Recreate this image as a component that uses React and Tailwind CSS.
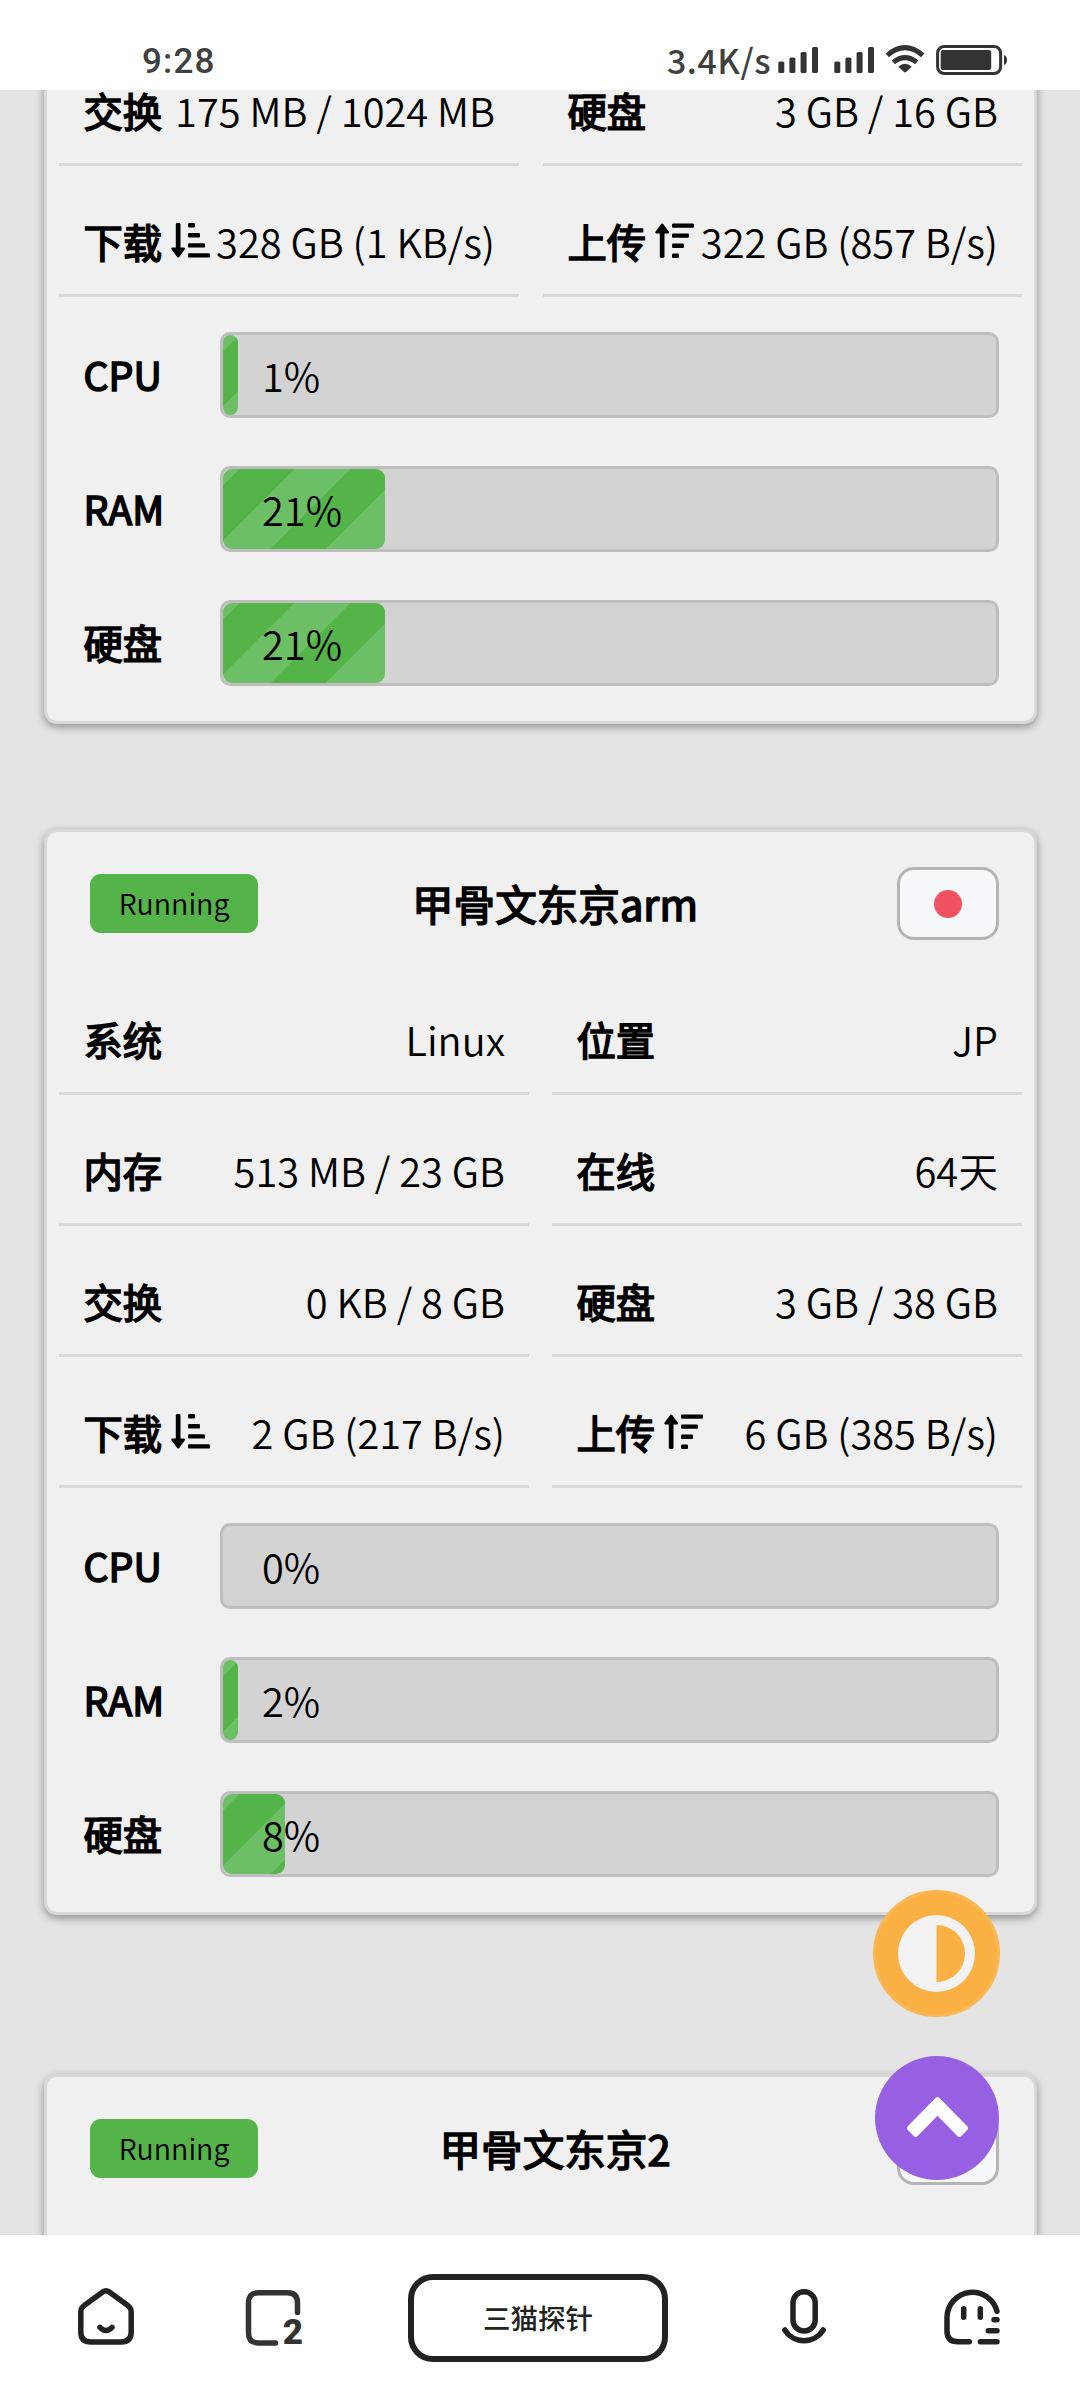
const StatusIcons = () => (
  <svg width="230" height="32" viewBox="0 0 230 32" fill="#333">
    {[0, 56].map((dx) => (
      <g key={dx}>
        <rect x={0.3 + dx} y="17.5" width="6" height="11.5" rx="1.6" />
        <rect x={11.4 + dx} y="13.5" width="6" height="15.5" rx="1.6" />
        <rect x={22.6 + dx} y="8" width="6" height="21" rx="1.6" />
        <rect x={34 + dx} y="3" width="6" height="26" rx="1.6" />
      </g>
    ))}
    <g fill="none" stroke="#333" strokeWidth="5">
      <path d="M109.3 11.3 Q127 -4 144.7 11.3" />
      <path d="M115.3 18.4 Q127 9 138.7 18.4" />
    </g>
    <path d="M120.3 22.7 Q127 17 133.7 22.7 L128 28 Q127 28.8 126 28 Z" />
    <rect x="159.6" y="2.5" width="63" height="27" rx="6.5" fill="none" stroke="#333" strokeWidth="3" />
    <rect x="162.7" y="6" width="50.5" height="20" rx="2.5" />
    <path d="M226 11 Q229 12 229 16 Q229 20 226 21 Z" />
  </svg>
);

const SortIcon = ({ up }) => (
  <svg width="39" height="35" viewBox="0 0 39 35" className={up ? "ml-[9px] -scale-y-100" : "ml-[9px]"}>
    <rect x="4.8" y="0" width="4.7" height="28" rx="1.4" />
    <path d="M1.2 24.6 H13.2 Q14.6 25.2 13.7 26.4 L8.2 33.9 Q7.2 34.9 6.2 33.9 L0.6 26.4 Q-0.2 25.2 1.2 24.6Z" />
    <rect x="17" y="0" width="7" height="4.4" rx="1.2" />
    <rect x="17" y="10.1" width="12" height="4.4" rx="1.2" />
    <rect x="17" y="20.2" width="17" height="4.4" rx="1.2" />
    <rect x="17" y="30.2" width="22" height="4.4" rx="1.2" />
  </svg>
);

const strong = "font-normal [-webkit-text-stroke:1.6px_#000]";

const Row = ({ label, value, icon }) => (
  <div className="flex h-[131px] items-center justify-between border-b-[3px] border-[#d9d9d9] pr-6 pl-[24.5px] pt-5 whitespace-nowrap">
    <div className="flex items-center">
      <span className={`text-[39.3px] ${strong}`}>{label}</span>
      {icon && <SortIcon up={icon === "up"} />}
    </div>
    <span className="-ml-2 pt-px">{value}</span>
  </div>
);

const Bar = ({ label, pct }) => (
  <div className="flex h-[86px] items-center">
    <span className={`w-[136.5px] pb-[3px] text-[39.3px] ${strong}`}>{label}</span>
    <div className="relative h-[86px] flex-1 rounded-[10px] border-[3px] border-[#bebebe] bg-[#d3d3d3]">
      {pct > 0 && (
        <div
          className="h-full min-w-[15px] rounded-[9px] bg-[repeating-linear-gradient(135deg,#6cbf65_0px,#6cbf65_11.7px,#54b349_11.7px,#54b349_50.8px,#6cbf65_50.8px,#6cbf65_78.2px)]"
          style={{ width: `${pct}%` }}
        />
      )}
      <span className="absolute top-0 left-[39px] flex h-full items-center pb-0.5">{pct}%</span>
    </div>
  </div>
);

const Bars = ({ data }) => (
  <div className="flex flex-col gap-12 pt-[35px] pr-[35px] pb-[35px] pl-[36.5px]">
    {data.map(([l, p]) => (
      <Bar key={l} label={l} pct={p} />
    ))}
  </div>
);

const Header = ({ title }) => (
  <div className="flex h-[132px] items-center pr-[35px] pl-[43px] pt-[11px]">
    <div className="flex h-[59px] w-[168px] items-center justify-center rounded-[11px] bg-[#54b349] pb-0.5 text-[28.6px]">
      Running
    </div>
    <span className={`ml-[67px] w-[460px] text-center text-[41.6px] ${strong}`}>{title}</span>
    <div className="ml-auto flex h-[73px] w-[102px] items-center justify-center rounded-[17px] border-[3px] border-[#b4b4b4] bg-[#f5f7fb]">
      <div className="size-7 rounded-full bg-[#ef5362]" />
    </div>
  </div>
);

const card =
  "w-[993px] shrink-0 border-[3px] border-[#d8d8d8] bg-[#f0f0f0] shadow-[0_3px_9px_rgba(0,0,0,0.38)]";

export default function App() {
  return (
    <div className="relative flex h-[2400px] w-[1080px] flex-col overflow-hidden bg-[#e4e4e4] font-['Noto_Sans_CJK_SC',sans-serif] text-[39.8px] leading-[57px] font-[350] text-black">
      <header className="z-10 flex h-[90px] shrink-0 items-start bg-white pt-[44px] font-[Roboto,sans-serif] text-[35px] leading-[34px] font-medium text-[#404040]">
        <span className="ml-[142px] pt-px tracking-[1.2px]">9:28</span>
        <span className="-mt-px ml-auto mr-[7px] font-['Noto_Sans_CJK_SC',sans-serif] text-[34px] tracking-[0.5px]">3.4K/s</span>
        <div className="mr-[72px]">
          <StatusIcons />
        </div>
      </header>

      <main className="flex flex-1 flex-col overflow-hidden pl-11">
        <section className={`${card} -mt-[55px] rounded-b-[13px] border-t-0`}>
          <div className="grid grid-cols-[460px_479px] gap-x-6 pl-3">
            <Row label="交换" value="175 MB / 1024 MB" />
            <Row label="硬盘" value="3 GB / 16 GB" />
            <Row label="下载" icon="down" value="328 GB (1 KB/s)" />
            <Row label="上传" icon="up" value="322 GB (857 B/s)" />
          </div>
          <Bars data={[["CPU", 1], ["RAM", 21], ["硬盘", 21]]} />
        </section>

        <section className={`${card} mt-[105px] rounded-[13px]`}>
          <Header title="甲骨文东京arm" />
          <div className="grid grid-cols-[470px_470px] gap-x-[23px] pl-3">
            <Row label="系统" value="Linux" />
            <Row label="位置" value="JP" />
            <Row label="内存" value="513 MB / 23 GB" />
            <Row label="在线" value="64天" />
            <Row label="交换" value="0 KB / 8 GB" />
            <Row label="硬盘" value="3 GB / 38 GB" />
            <Row label="下载" icon="down" value="2 GB (217 B/s)" />
            <Row label="上传" icon="up" value="6 GB (385 B/s)" />
          </div>
          <Bars data={[["CPU", 0], ["RAM", 2], ["硬盘", 8]]} />
        </section>

        <section className={`${card} mt-[159px] h-[400px] rounded-[13px]`}>
          <Header title="甲骨文东京2" />
        </section>
      </main>

      <div className="absolute top-[1890px] left-[873px] flex size-[127px] items-center justify-center rounded-full border-[3px] border-[#f9b855] bg-[#fab042]">
        <svg width="77" height="77" viewBox="0 0 77 77">
          <circle cx="38.5" cy="38.5" r="38.5" fill="#f2f2f2" />
          <path d="M38.5 10 A28.5 28.5 0 0 1 38.5 67 Z" fill="#fab042" />
        </svg>
      </div>
      <div className="absolute top-[2056px] left-[875px] flex size-[124px] items-center justify-center rounded-full bg-[#975fe2]">
        <svg width="61" height="40" viewBox="90 480 1612 1035" fill="#fff" preserveAspectRatio="none" className="mb-[3px]">
          <path d="M1683 1331l-166 165q-19 19-45 19t-45-19l-531-531-531 531q-19 19-45 19t-45-19l-166-165q-19-19-19-45.5t19-45.5l742-741q19-19 45-19t45 19l742 741q19 19 19 45.5t-19 45.5z" />
        </svg>
      </div>

      <nav className="z-10 flex h-[165px] shrink-0 items-center bg-white text-[#222]">
        <svg className="ml-[78px] -mt-[3px]" width="56" height="58" viewBox="0 0 56 58" fill="none" stroke="#222" strokeWidth="5.5" strokeLinecap="round">
          <path d="M31 4.8 L49.5 18.3 Q53.2 21 53.2 25 V45 Q53.2 55 43 55 H13 Q2.8 55 2.8 45 V25 Q2.8 21 6.5 18.3 L25 4.8 Q28 2.6 31 4.8Z" />
          <path d="M22 40.3 Q28 46.5 34 40.3" />
        </svg>
        <div className="relative ml-[111px] -mt-px h-[57px] w-[60px]">
          <svg width="60" height="57" viewBox="0 0 60 57" fill="none" stroke="#333" strokeWidth="5.5" strokeLinecap="round">
            <path d="M52.5 23.5 V14 Q52.5 3.8 42.5 3.8 H13.5 Q3.5 3.8 3.5 14 V44 Q3.5 54 13.5 54 H30.5" />
          </svg>
          <span className="absolute right-0.5 bottom-0 font-[Roboto,sans-serif] text-[35px] leading-[26px] font-black text-[#333]">2</span>
        </div>
        <div className="ml-[103px] flex h-[88px] w-[260px] items-center justify-center rounded-[25px] border-[6px] border-[#222] text-[27.5px] font-medium">
          三猫探针
        </div>
        <svg className="ml-[114px] -mt-px" width="44" height="56" viewBox="0 0 44 56" fill="none" stroke="#222" strokeWidth="5.5" strokeLinecap="round">
          <rect x="11" y="2.8" width="22.2" height="39.2" rx="11" />
          <path d="M2.8 41 A22.5 22.5 0 0 0 41.2 41" />
        </svg>
        <svg className="ml-[118px] -mt-px" width="56" height="56" viewBox="0 0 56 56" fill="none" stroke="#222" strokeWidth="5.5" strokeLinecap="round">
          <path d="M53 22.3 A25.4 25.4 0 0 0 3 28.3 V42 Q3 52.8 14 52.8 H25.3" />
          <path d="M19.7 19.8 V28.2 M36.3 19.8 V28.2 M50 30.7 H53 M44.3 41.7 H53 M36.4 52.8 H53" />
        </svg>
      </nav>
    </div>
  );
}
